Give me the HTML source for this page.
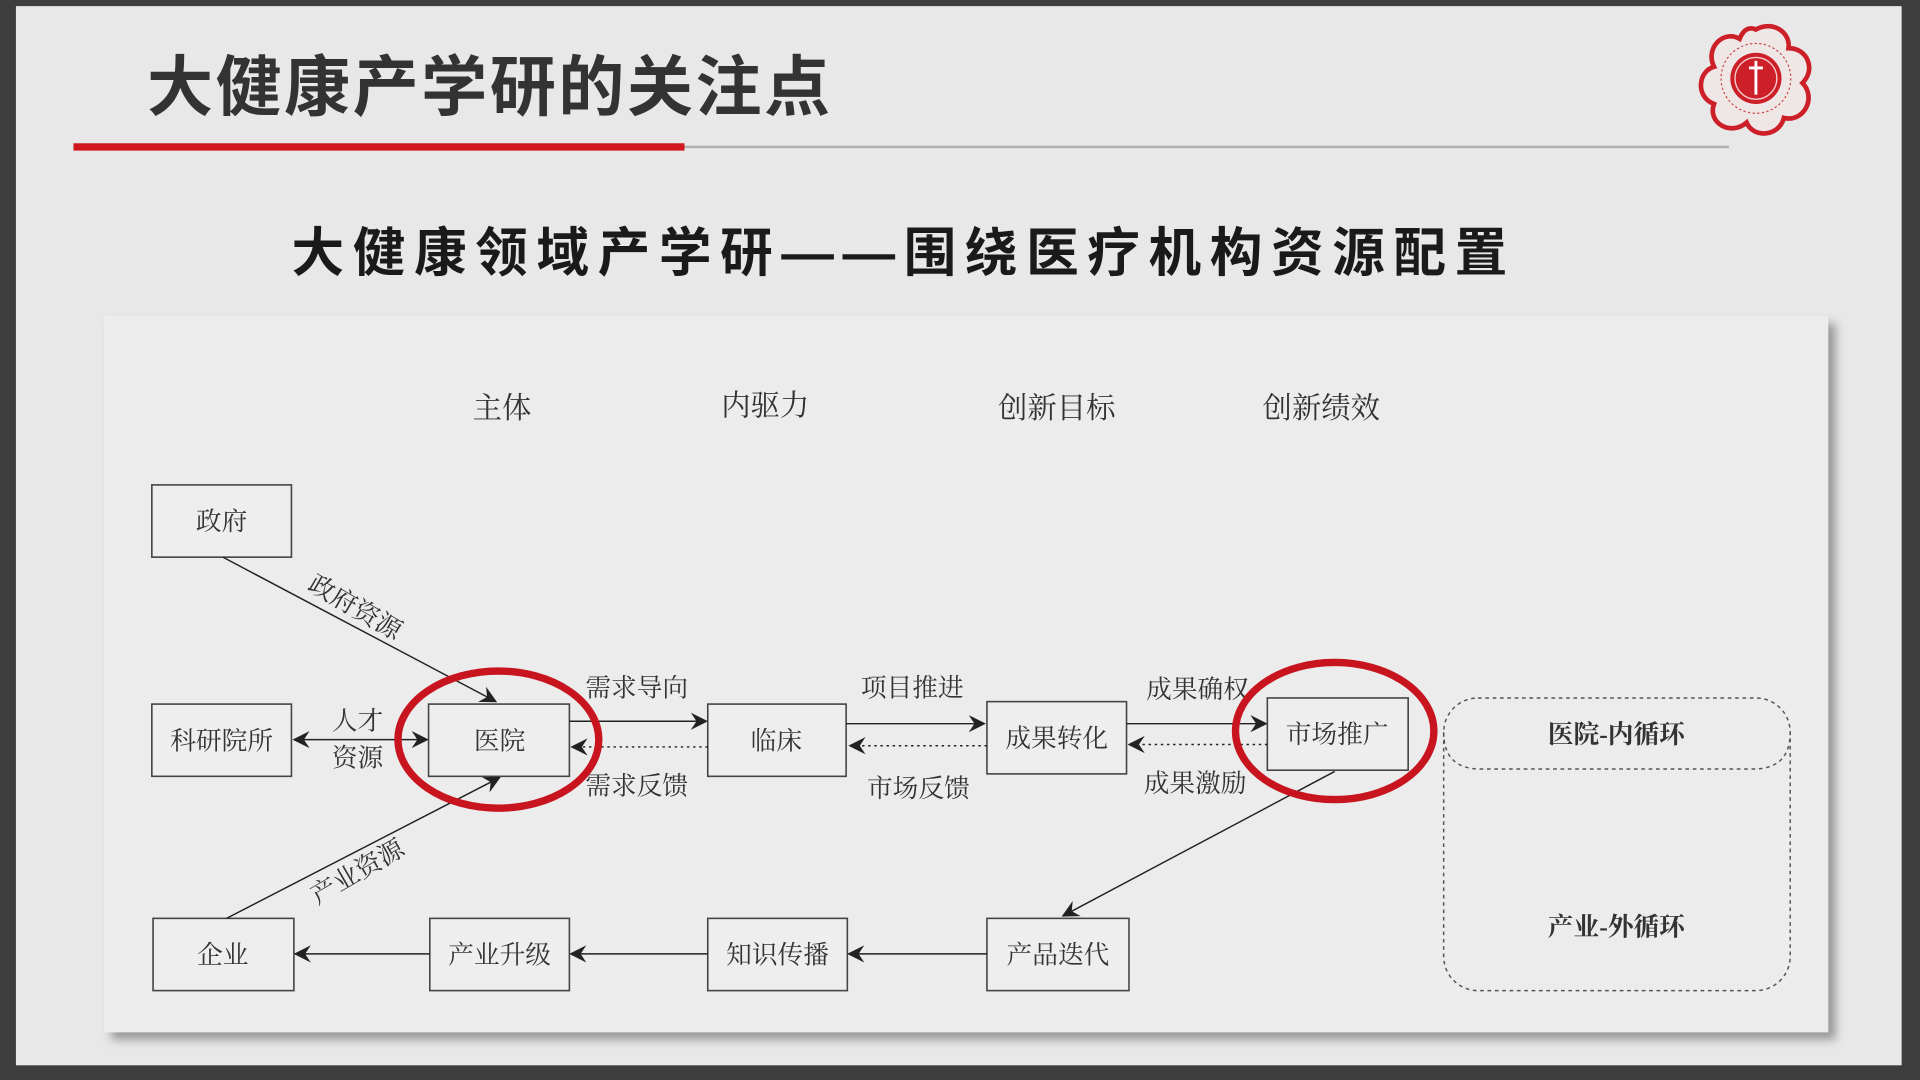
<!DOCTYPE html>
<html><head><meta charset="utf-8"><style>
html,body{margin:0;padding:0;width:1920px;height:1080px;overflow:hidden;background:#3d3d3d}
svg{display:block}
.t{font-family:"Liberation Serif","Noto Serif CJK SC",serif;font-size:21px;fill:#333;text-anchor:middle;dominant-baseline:central}
.h{font-family:"Liberation Serif","Noto Serif CJK SC",serif;font-size:24px;fill:#333;text-anchor:middle;dominant-baseline:central}
</style></head><body>
<svg width="1920" height="1080" viewBox="0 0 1568 882" xmlns="http://www.w3.org/2000/svg">
<defs>
<marker id="a" viewBox="0 0 12 12" refX="11" refY="6" markerWidth="14" markerHeight="14" markerUnits="userSpaceOnUse" orient="auto-start-reverse">
<path d="M0,0 L12,6 L0,12 L4,6 Z" fill="#222"/></marker>
<filter id="sh" x="-5%" y="-5%" width="115%" height="115%"><feDropShadow dx="6" dy="6" stdDeviation="4" flood-color="#000" flood-opacity="0.35"/></filter>
</defs>
<rect x="0" y="0" width="1568" height="882" fill="#3d3d3d"/>
<rect x="13" y="5" width="1540" height="865" fill="#e8e8e8"/>
<text x="120" y="72" font-family="'Liberation Sans','Noto Sans CJK SC',sans-serif" font-weight="bold" font-size="54" fill="#333" dominant-baseline="central" letter-spacing="2">大健康产学研的关注点</text>
<rect x="60" y="117" width="499" height="6" fill="#d0161f"/>
<rect x="559" y="119" width="853" height="2" fill="#b0b0b0"/>
<!-- logo -->
<g transform="translate(1434,64) scale(0.95)">
<path d="M0,-42 C14,-50 30,-40 28,-26 C44,-26 52,-8 40,4 C52,16 42,38 24,34 C20,50 -2,52 -8,38 C-22,50 -42,38 -36,22 C-52,16 -50,-6 -36,-10 C-44,-26 -28,-42 -14,-34 C-10,-44 -4,-44 0,-42 Z" fill="#efe6e6" stroke="#cc1f28" stroke-width="4"/>
<circle r="30" fill="none" stroke="#c44" stroke-width="1" stroke-dasharray="2,2"/>
<circle r="22" fill="#cc1f28"/><circle r="18" fill="none" stroke="#f5cccc" stroke-width="1.2"/>
<path d="M0,-15 L0,14 M-6,-9 L6,-9" stroke="#fff" stroke-width="2.5"/>
</g>
<text x="738" y="207" text-anchor="middle" font-family="'Liberation Sans','Noto Sans CJK SC',sans-serif" font-weight="bold" font-size="43" fill="#1a1a1a" dominant-baseline="central" letter-spacing="7">大健康领域产学研——围绕医疗机构资源配置</text>
<!-- panel -->
<rect x="85" y="258" width="1408" height="585" fill="#ececec" filter="url(#sh)"/>
<g class="h"><text class="h" x="410" y="334">主体</text><text class="h" x="625" y="332">内驱力</text><text class="h" x="863" y="334">创新目标</text><text class="h" x="1079" y="334">创新绩效</text></g>
<g fill="#eeeeee" stroke="#444" stroke-width="1.3">
<rect x="124" y="396" width="114" height="59"/>
<rect x="124" y="575" width="114" height="59"/>
<rect x="350" y="575" width="115" height="59"/>
<rect x="578" y="575" width="113" height="59"/>
<rect x="806" y="573" width="114" height="59"/>
<rect x="1035" y="570" width="115" height="59"/>
<rect x="125" y="750" width="115" height="59"/>
<rect x="351" y="750" width="114" height="59"/>
<rect x="578" y="750" width="114" height="59"/>
<rect x="806" y="750" width="116" height="59"/>
</g>
<g class="t">
<text class="t" x="181" y="426">政府</text><text class="t" x="181" y="605">科研院所</text><text class="t" x="408" y="605">医院</text>
<text class="t" x="634" y="605">临床</text><text class="t" x="863" y="603">成果转化</text><text class="t" x="1092" y="600">市场推广</text>
<text class="t" x="182" y="780">企业</text><text class="t" x="408" y="780">产业升级</text><text class="t" x="635" y="780">知识传播</text><text class="t" x="864" y="780">产品迭代</text>
<text class="t" x="520" y="562">需求导向</text><text class="t" x="520" y="642">需求反馈</text>
<text class="t" x="745" y="562">项目推进</text><text class="t" x="750" y="644">市场反馈</text>
<text class="t" x="978" y="563">成果确权</text><text class="t" x="976" y="640">成果激励</text>
<text class="t" x="292" y="589">人才</text><text class="t" x="292" y="619">资源</text>
<text class="t" transform="translate(290,496) rotate(30)">政府资源</text>
<text class="t" transform="translate(292,712) rotate(-30)">产业资源</text>
</g>
<g stroke="#222" stroke-width="1.2" fill="none">
<line x1="182" y1="455" x2="405" y2="573" marker-end="url(#a)"/>
<line x1="185" y1="750" x2="408" y2="635" marker-end="url(#a)"/>
<line x1="240" y1="604" x2="349" y2="604" marker-start="url(#a)" marker-end="url(#a)"/>
<line x1="465" y1="589" x2="577" y2="589" marker-end="url(#a)"/>
<line x1="691" y1="591" x2="804" y2="591" marker-end="url(#a)"/>
<line x1="920" y1="591" x2="1034" y2="591" marker-end="url(#a)"/>
<line x1="1090" y1="630" x2="868" y2="748" marker-end="url(#a)"/>
<line x1="806" y1="779" x2="693" y2="779" marker-end="url(#a)"/>
<line x1="578" y1="779" x2="466" y2="779" marker-end="url(#a)"/>
<line x1="351" y1="779" x2="241" y2="779" marker-end="url(#a)"/>
<g stroke-dasharray="2,3"><line x1="578" y1="610" x2="467" y2="610" marker-end="url(#a)"/>
<line x1="806" y1="609" x2="694" y2="609" marker-end="url(#a)"/>
<line x1="1035" y1="608" x2="922" y2="608" marker-end="url(#a)"/></g>
</g>
<g stroke="#555" stroke-width="1.2" fill="none" stroke-dasharray="3,3">
<rect x="1179" y="570" width="283" height="239" rx="28"/>
<path d="M1179,598 Q1179,628 1209,628 L1432,628 Q1462,628 1462,598"/>
</g>
<text class="h" x="1320" y="600" style="font-size:21px;font-weight:bold">医院-内循环</text>
<text class="h" x="1320" y="757" style="font-size:21px;font-weight:bold">产业-外循环</text>
<g fill="none" stroke="#c8141e" stroke-width="6">
<ellipse cx="407" cy="604" rx="82" ry="56"/>
<ellipse cx="1090" cy="597" rx="81" ry="56"/>
</g>
</svg>
</body></html>
